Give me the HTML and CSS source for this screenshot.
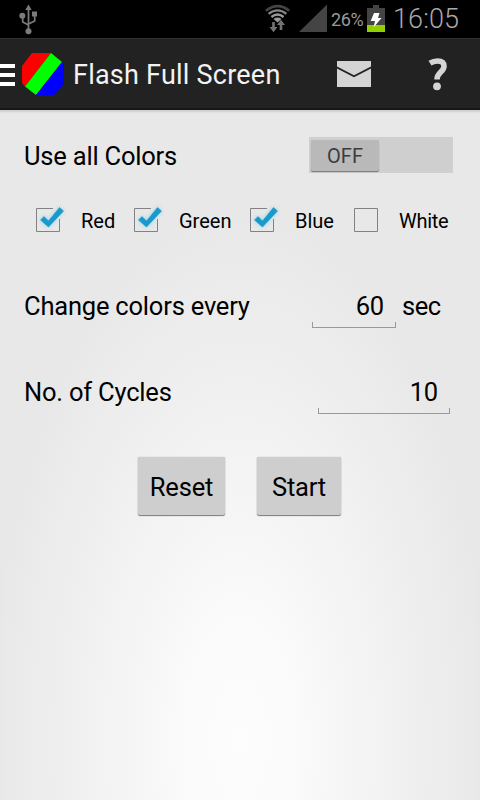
FILE: index.html
```html
<!DOCTYPE html>
<html lang="en">
<head>
<meta charset="utf-8">
<title>Flash Full Screen</title>
<link rel="stylesheet" href="styles.css">
</head>
<body>
<div class="screen">
  <div class="status-bar">
    <svg class="usb" width="22" height="32" viewBox="0 0 22 32" fill="none" stroke="#7b7b7b" stroke-width="1.700">
      <path d="M10.500 6v21M10.500 21L4.700 18V12M10.500 20L16.700 17V11"/>
      <path d="M10.500 .5l3.200 5.500H7.300z" fill="#7b7b7b" stroke="none"/>
      <circle cx="4.300" cy="11.800" r="3" fill="#7b7b7b" stroke="none"/>
      <path d="M14 7.500h5v5h-5z" fill="#7b7b7b" stroke="none"/>
      <circle cx="10.500" cy="27.200" r="3" fill="#7b7b7b" stroke="none"/>
    </svg>
    <svg class="wifi" width="28" height="30" viewBox="0 0 28 30" fill="none">
      <path d="M1.800 6.700Q14-2.500 25.200 6.700" stroke="#444" stroke-width="2.600"/>
      <path d="M4.600 9.900Q13.500 2.900 22.400 9.900" stroke="#858585" stroke-width="2.300"/>
      <path d="M7.400 13Q13.500 8 19.600 13" stroke="#999" stroke-width="2.300"/>
      <path d="M9.500 15Q13.500 12.200 17.500 15L13.500 18.500z" fill="#999"/>
      <path d="M9.500 18v6.500M17 26v-6" stroke="#737373" stroke-width="2.600"/>
      <path d="M5.500 23h8l-4 5.200zM13 21h8L17 15.800z" fill="#737373"/>
    </svg>
    <svg class="signal" width="28" height="28" viewBox="0 0 28 28"><path d="M28 .5v27.500H0z" fill="#444"/></svg>
    <span class="percent">26%</span>
    <svg class="battery" width="18" height="27" viewBox="0 0 18 27">
      <path d="M6 0h6v3h6v24H0V3h6z" fill="#444"/>
      <path d="M0 20h18v7H0z" fill="#90cf00"/>
      <path d="M7 8h5.500L11 13h3.500L6.500 22.500 8 16H3.700z" fill="#fff"/>
    </svg>
    <span class="clock">16:05</span>
  </div>
  <header class="action-bar">
    <svg class="menu" width="15" height="22" viewBox="0 0 15 22"><path d="M0 0h15v4H0zM0 9h15v4H0zM0 18h15v4H0z" fill="#fff"/></svg>
    <svg class="logo" width="44" height="44" viewBox="0 0 44 44">
      <path d="M11 1h19L4 34.500 1 31V14z" fill="#f00"/>
      <path d="M30 1l11 9L15 43 4 34.500z" fill="#0f0"/>
      <path d="M41 10l2 3v19.500L33 43H15z" fill="#00f"/>
    </svg>
    <h1 class="title">Flash Full Screen</h1>
    <svg class="mail" width="34" height="26" viewBox="0 0 34 26">
      <path d="M0 0h34v5.500L17 14.200 0 5.500z" fill="#d4d4d4"/>
      <path d="M0 7.500l17 8.700 17-8.700V26H0z" fill="#d4d4d4"/>
    </svg>
    <svg class="help" width="20" height="34" viewBox="0 0 20 34">
      <path d="M2 5.200Q5.500 3 9.500 3C14 3 16 5 16 8.200 16 14.200 9 14 9 21.500" fill="none" stroke="#d4d4d4" stroke-width="5.600"/>
      <circle cx="9" cy="28.300" r="3.900" fill="#d4d4d4"/>
    </svg>
  </header>
  <main class="content">
    <div class="row row-toggle">
      <span>Use all Colors</span>
      <div class="switch"><div class="thumb">OFF</div></div>
    </div>
    <div class="checks">
      <div class="check red"><svg class="box" width="34" height="34" viewBox="0 0 34 34"><path class="frame" d="M21 6.500H4.500v23h23V17"/><path class="tick" d="M8.500 18l3.500-3.500 4.500 4.500L27.500 5.500l4 3.500L16.500 25z"/></svg><span>Red</span></div>
      <div class="check green"><svg class="box" width="34" height="34" viewBox="0 0 34 34"><path class="frame" d="M21 6.500H4.500v23h23V17"/><path class="tick" d="M8.500 18l3.500-3.500 4.500 4.500L27.500 5.500l4 3.500L16.500 25z"/></svg><span>Green</span></div>
      <div class="check blue"><svg class="box" width="34" height="34" viewBox="0 0 34 34"><path class="frame" d="M21 6.500H4.500v23h23V17"/><path class="tick" d="M8.500 18l3.500-3.500 4.500 4.500L27.500 5.500l4 3.500L16.500 25z"/></svg><span>Blue</span></div>
      <div class="check white"><svg class="box" width="34" height="34" viewBox="0 0 34 34"><path class="frame" d="M4.500 6.500h23v23h-23z"/></svg><span>White</span></div>
    </div>
    <div class="row row-interval">
      <span>Change colors every</span>
      <div class="field interval"><span>60</span></div>
      <span class="unit">sec</span>
    </div>
    <div class="row row-cycles">
      <span>No. of Cycles</span>
      <div class="field cycles"><span>10</span></div>
    </div>
    <div class="actions">
      <div class="button reset">Reset</div>
      <div class="button start">Start</div>
    </div>
  </main>
</div>
</body>
</html>
```
FILE: styles.css
```css
* { box-sizing: border-box; }
body { margin: 0; font-family: Roboto, sans-serif; color: #000; }
svg { display: block; flex: none; }
span, .title, .button { white-space: nowrap; }
.screen { width: 480px; height: 800px; overflow: hidden; display: flex; flex-direction: column; }

.status-bar { height: 38px; flex: none; background: #000; display: flex; align-items: flex-start; }
.usb { margin: 4px 0 0 18px; }
.wifi { margin: 4px 0 0 224px; }
.signal { margin: 4px 0 0 7px; }
.percent { width: 36px; margin: 5px 0 0 4px; font-size: 18px; line-height: 30px; letter-spacing: -.4px; color: #999; }
.battery { margin-top: 5px; }
.clock { margin: 3px 0 0 8px; font-size: 27px; line-height: 32px; letter-spacing: .1px; color: #a8a8a8; font-weight: 300; }

.action-bar { height: 72px; flex: none; background: #222; border-top: 1px solid #303030; border-bottom: 2px solid #171717; display: flex; align-items: flex-start; }
.menu { margin-top: 25px; }
.logo { margin: 13px 0 0 6px; }
.title { width: 263px; margin: 19px 0 0 8px; font-size: 27px; line-height: 34px; font-weight: 400; letter-spacing: .23px; color: #f3f3f3; }
.mail { margin-top: 22px; margin-left: 1px; }
.help { margin: 19px 0 0 57px; }

.content { flex: 1; padding-top: 27px; background: radial-gradient(ellipse 250px 530px at 50% 630px, #fdfdfd 0%, #fbfbfb 20%, #e8e8e8 100%); box-shadow: inset 0 3px 2px -1px #cfcfcf; }
.row { display: flex; align-items: center; padding-left: 24px; font-size: 25.5px; line-height: 38px; letter-spacing: -.2px; }
.row-toggle { height: 38px; }
.switch { width: 144px; height: 36px; margin: 0 27px 2px auto; padding: 3px 2px; background: #cfcfcf; }
.thumb { width: 68px; height: 31px; border-radius: 2px; background: #b9b9b9; box-shadow: 0 1px 1px #777; text-align: center; font-size: 20px; line-height: 32px; letter-spacing: 0; color: #3c3c3c; }

.checks { display: flex; margin-top: 27px; padding-left: 32px; height: 34px; font-size: 20px; line-height: 38px; }
.check { display: flex; }
.check span { margin-left: 15px; }
.red { width: 98px; }
.green { width: 116px; }
.blue { width: 104px; }
.white span { letter-spacing: -.3px; }
.frame { fill: none; stroke: #828282; }
.tick { fill: #159bcd; stroke: #3188ab; stroke-width: .5; filter: drop-shadow(0 0 2px #8bd4ef); }

.row-interval { margin-top: 51px; height: 38px; }
.field { display: flex; justify-content: flex-end; padding-right: 12px; height: 38px; background: linear-gradient(#999, #999) left bottom / 1px 6px no-repeat, linear-gradient(#999, #999) right bottom / 1px 6px no-repeat, linear-gradient(#999, #999) left bottom / 100% 1px no-repeat; }
.field span { margin-top: -3px; }
.interval { width: 84px; margin: 6px 0 0 auto; }
.unit { width: 84px; padding-left: 6px; letter-spacing: -.5px; }
.row-cycles { margin-top: 48px; height: 38px; }
.cycles { width: 132px; margin: 6px 30px 0 auto; }

.actions { display: flex; gap: 32px; margin-top: 46px; padding-left: 138px; }
.button { height: 58px; background: #cecece; border-radius: 2px; box-shadow: 0 0 1px #999, 0 1px 1px #777; text-align: center; font-size: 25.5px; line-height: 61px; letter-spacing: -.2px; }
.reset { width: 87px; }
.start { width: 84px; }
```
